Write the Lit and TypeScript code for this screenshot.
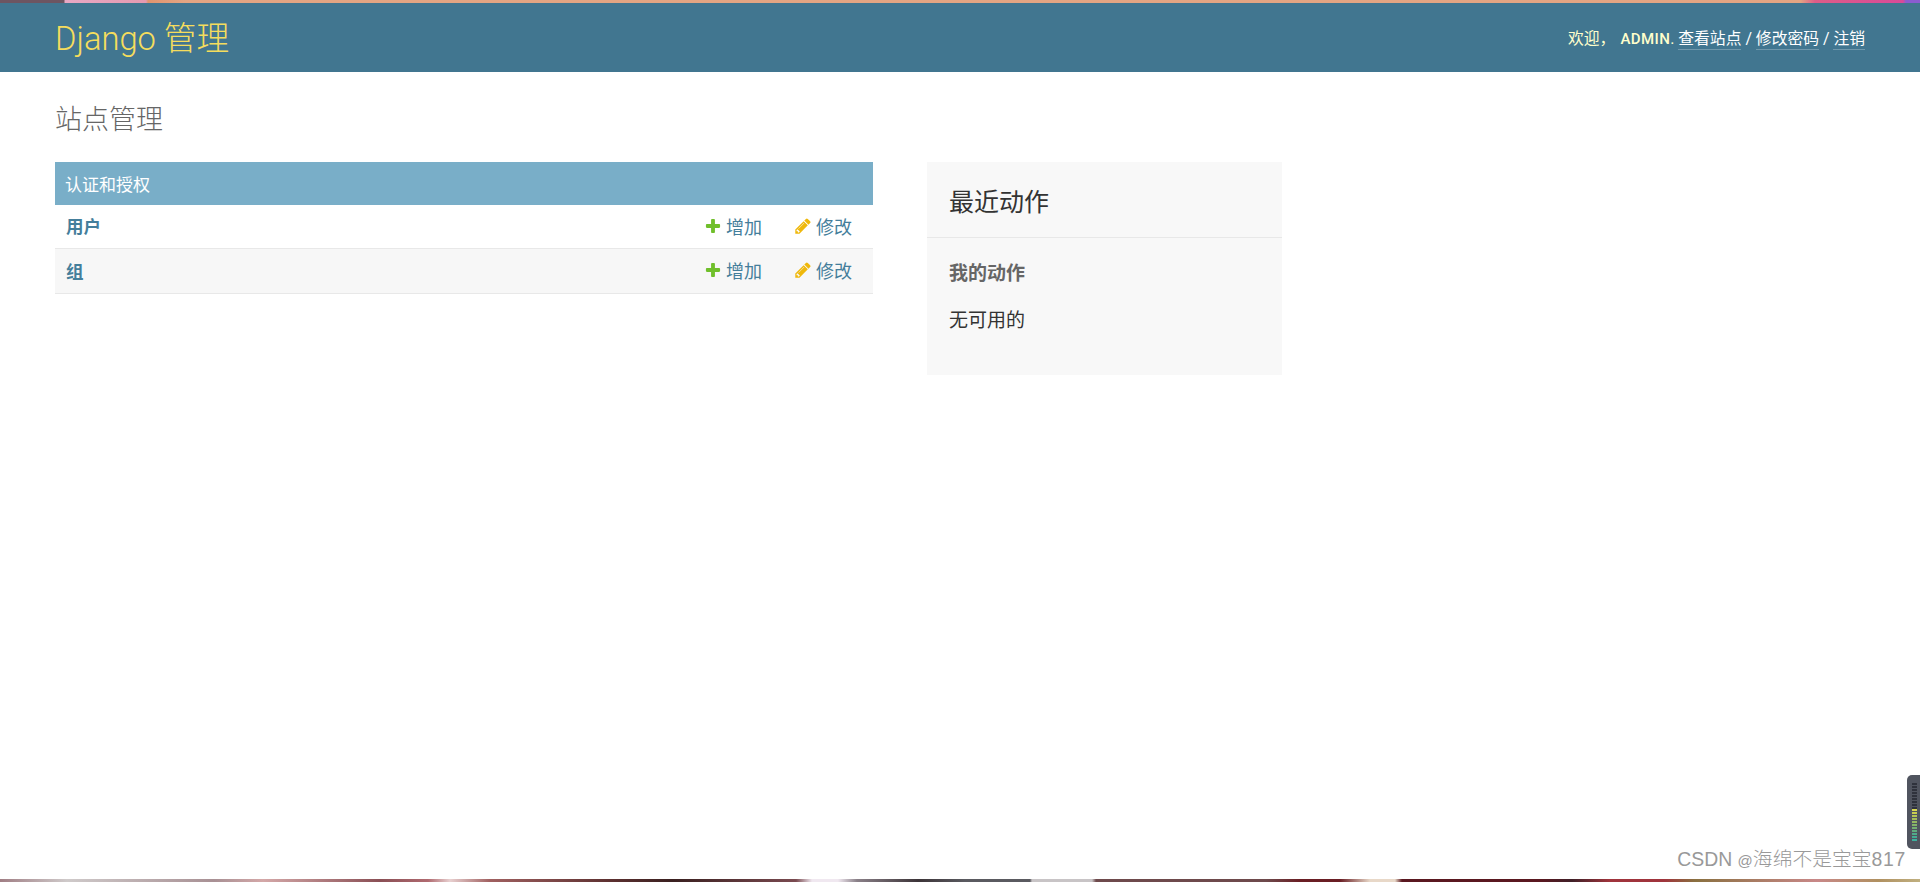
import { LitElement, html, css, svg } from "lit";
import { customElement } from "lit/decorators.js";

const plus = svg`<path fill="#70bf2b" d="M1600 796v192q0 40-28 68t-68 28h-416v416q0 40-28 68t-68 28h-192q-40 0-68-28t-28-68v-416h-416q-40 0-68-28t-28-68v-192q0-40 28-68t68-28h416v-416q0-40 28-68t68-28h192q40 0 68 28t28 68v416h416q40 0 68 28t28 68z"/>`;
const pencil = svg`<path fill="#efb80b" d="M491 1536l91-91-235-235-91 91v107h128v128h107zm523-928q0-22-22-22-10 0-17 7l-542 542q-7 7-7 17 0 22 22 22 10 0 17-7l542-542q7-7 7-17zm-54-192l416 416-832 832h-416v-416zm683 96q0 53-37 90l-166 166-416-416 166-165q36-38 90-38 53 0 91 38l235 234q37 39 37 91z"/>`;

const meterColors = ["#2f323c","#2f323c","#2f323c","#2f323c","#2f323c","#2f323c","#2f323c","#2f323c","#2f323c","#d8d850","#c8cc50","#b4c454","#a4bc5a","#94b860","#84b468","#74b072","#60ac7e","#50ac8a","#44ac94","#3cb09e"];

@customElement("app-root")
export class AppRoot extends LitElement {
  static styles = css`
    :host {
      display: flex;
      flex-direction: column;
      height: 882px;
      overflow: hidden;
      position: relative;
      background: #fff;
      font-family: Roboto, "Noto Sans CJK SC", sans-serif;
      color: #333;
    }
    .top-strip {
      height: 3px;
      flex: none;
      background: linear-gradient(90deg, #6d5561 0, #6d5561 64px, #e8a8c4 65px, #e49ab0 146px, #e0946e 148px, #e3a583 185px, #e3a583 1800px, #dd5c88 1815px, #d94a98 1903px, #8a5cd0 1906px);
    }
    header {
      flex: none;
      height: 69px;
      box-sizing: border-box;
      padding: 0 55px;
      background: #417690;
      display: flex;
      align-items: center;
      justify-content: space-between;
    }
    .brand {
      margin: 0;
      padding-top: 2px;
      font-size: 32.7px;
      font-weight: 300;
      color: #f5dd5d;
      line-height: 40px;
    }
    .tools {
      font-size: 15.8px;
      font-weight: 400;
      color: #ffc;
      display: flex;
      align-items: baseline;
      white-space: pre;
    }
    .tools strong { font-size: 15px; font-weight: 500; letter-spacing: 0.4px; margin-left: 5px; }
    .tools a { color: #fff; border-bottom: 1px solid rgba(255,255,255,0.25); }
    .tools .sep { color: #fff; }
    main {
      flex: 1;
      padding: 0 55px;
    }
    h2.title {
      margin: 0;
      padding-top: 34px;
      font-size: 27px;
      line-height: 29px;
      font-weight: 300;
      color: #666;
    }
    .cols {
      display: flex;
      align-items: flex-start;
      gap: 54px;
      margin-top: 27px;
    }
    .module { width: 818px; flex: none; }
    .caption {
      height: 43px;
      box-sizing: border-box;
      padding-left: 10px;
      background: #79aec8;
      color: #fff;
      font-size: 17px;
      font-weight: 400;
      display: flex;
      align-items: center;
    }
    .row {
      height: 44px;
      box-sizing: border-box;
      border-bottom: 1px solid #e8e8e8;
      display: flex;
      align-items: center;
      padding: 0 21px 2px 11px;
      font-size: 18px;
      color: #447e9b;
    }
    .row.alt { background: #f7f7f7; height: 45px; }
    .name { flex: 1; font-weight: 700; font-size: 17.5px; }
    .link { display: flex; align-items: center; gap: 4px; white-space: nowrap; }
    .link svg { width: 18px; height: 18px; flex: none; }
    .link.add { width: 90px; }
    .link.change { width: 58px; }
    aside {
      width: 355px;
      height: 213px;
      flex: none;
      background: #f8f8f8;
    }
    aside h2 {
      margin: 0;
      height: 76px;
      box-sizing: border-box;
      padding: 0 22px;
      border-bottom: 1px solid #e8e8e8;
      display: flex;
      align-items: center;
      font-size: 25px;
      font-weight: 400;
      color: #333;
    }
    aside h3 {
      margin: 23px 22px 0;
      font-size: 19px;
      line-height: 26px;
      font-weight: 700;
      color: #666;
    }
    aside p {
      margin: 21px 22px 0;
      font-size: 19px;
      line-height: 26px;
      color: #333;
    }
    .bottom-strip {
      height: 3px;
      flex: none;
      background: linear-gradient(90deg, #a07e84 0, #cfcaca 67px, #a89094 214px, #d4a8a8 263px, #8a4f55 380px, #b06a70 428px, #e8d0d0 450px, #a06060 490px, #5c3030 612px, #3a2020 673px, #7a4a50 796px, #f0e8f0 812px, #f0e8f0 838px, #8a8088 857px, #3c3438 918px, #5a5a60 965px, #5a5a60 1030px, #c8c4c6 1032px, #c8c4c6 1092px, #6e4a4c 1096px, #6e4a4c 1266px, #6a1e24 1300px, #6a1e24 1340px, #e8d8c8 1370px, #e8d8c8 1395px, #5a1820 1402px, #5a1820 1541px, #402028 1572px, #a0343c 1610px, #a0343c 1664px, #8a7040 1695px, #c88888 1817px, #b09060 1878px, #c0b080 1920px);
    }
    .watermark {
      position: absolute;
      right: 14px;
      bottom: 9px;
      font-family: "Liberation Sans", "Noto Sans CJK SC", sans-serif;
      font-size: 19.4px;
      line-height: 24px;
      font-weight: 300;
      color: #999;
    }
    .watermark .at { font-size: 15px; }
    .watermark .cn { font-size: 19.8px; }
    .watermark .num { letter-spacing: 0.7px; }
    .meter {
      position: absolute;
      right: 0;
      top: 775px;
      width: 13px;
      height: 74px;
      box-sizing: border-box;
      padding: 8px 3px 8px 5px;
      background: #50545f;
      border-radius: 5px 0 0 5px;
      display: flex;
      flex-direction: column;
      justify-content: space-between;
    }
    .meter i { display: block; height: 2px; }
  `;

  private link(kind: "add" | "change", text: string) {
    return html`<span class="link ${kind}"><svg viewBox="0 0 1792 1792">${kind === "add" ? plus : pencil}</svg>${text}</span>`;
  }

  render() {
    return html`
      <div class="top-strip"></div>
      <header>
        <h1 class="brand">Django 管理</h1>
        <div class="tools">欢迎，<strong>ADMIN</strong>. <a>查看站点</a><span class="sep"> / </span><a>修改密码</a><span class="sep"> / </span><a>注销</a></div>
      </header>
      <main>
        <h2 class="title">站点管理</h2>
        <div class="cols">
          <section class="module">
            <div class="caption">认证和授权</div>
            <div class="row"><span class="name">用户</span>${this.link("add", "增加")}${this.link("change", "修改")}</div>
            <div class="row alt"><span class="name">组</span>${this.link("add", "增加")}${this.link("change", "修改")}</div>
          </section>
          <aside>
            <h2>最近动作</h2>
            <h3>我的动作</h3>
            <p>无可用的</p>
          </aside>
        </div>
      </main>
      <div class="bottom-strip"></div>
      <div class="watermark">CSDN <span class="at">@</span><span class="cn">海绵不是宝宝</span><span class="num">817</span></div>
      <div class="meter">${meterColors.map((c) => html`<i style="background:${c}"></i>`)}</div>
    `;
  }
}
